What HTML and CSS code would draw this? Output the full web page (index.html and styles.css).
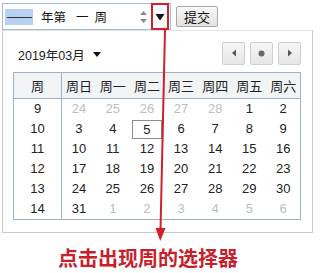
FILE: index.html
```
<!DOCTYPE html>
<html lang="zh">
<head>
<meta charset="utf-8">
<title>周选择器</title>
<link rel="stylesheet" href="styles.css">
</head>
<body>
<div class="page">
  <div class="top">
    <div class="week-input">
      <span class="sel">——</span>
      <span class="seg seg-y">年第</span>
      <span class="seg seg-n">一</span>
      <span class="seg seg-w">周</span>
      <span class="spin">
        <svg width="9" height="16" viewBox="0 0 9 16"><path d="M1 6 L4.5 2 L8 6 Z" fill="#8a8a8a"/><path d="M1 10 L4.5 14 L8 10 Z" fill="#8a8a8a"/></svg>
      </span>
      <span class="drop">
        <svg width="10" height="8" viewBox="0 0 10 8"><path d="M0.5 1 L9.5 1 L5 7.5 Z" fill="#111"/></svg>
      </span>
    </div>
    <button class="submit">提交</button>
  </div>

  <div class="popup">
    <div class="pop-head">
      <div class="month">2019年03月<svg class="caret" width="8" height="5" viewBox="0 0 8 5"><path d="M0 0 L8 0 L4 5 Z" fill="#111"/></svg></div>
      <div class="navs">
        <span class="nav"><svg width="6" height="8" viewBox="0 0 6 8"><path d="M5 0.5 L1 4 L5 7.5 Z" fill="#555"/></svg></span>
        <span class="nav"><svg width="7" height="7" viewBox="0 0 7 7"><circle cx="3.5" cy="3.5" r="3" fill="#666"/></svg></span>
        <span class="nav"><svg width="6" height="8" viewBox="0 0 6 8"><path d="M1 0.5 L5 4 L1 7.5 Z" fill="#555"/></svg></span>
      </div>
    </div>
    <table class="cal">
      <colgroup><col class="c-wk"><col><col><col><col><col><col><col></colgroup>
      <thead>
        <tr><th class="wk">周</th><th>周日</th><th>周一</th><th>周二</th><th>周三</th><th>周四</th><th>周五</th><th>周六</th></tr>
      </thead>
      <tbody>
        <tr><td class="wk">9</td><td class="o">24</td><td class="o">25</td><td class="o">26</td><td class="o">27</td><td class="o">28</td><td>1</td><td>2</td></tr>
        <tr><td class="wk">10</td><td>3</td><td>4</td><td><span class="today">5</span></td><td>6</td><td>7</td><td>8</td><td>9</td></tr>
        <tr><td class="wk">11</td><td>10</td><td>11</td><td>12</td><td>13</td><td>14</td><td>15</td><td>16</td></tr>
        <tr><td class="wk">12</td><td>17</td><td>18</td><td>19</td><td>20</td><td>21</td><td>22</td><td>23</td></tr>
        <tr><td class="wk">13</td><td>24</td><td>25</td><td>26</td><td>27</td><td>28</td><td>29</td><td>30</td></tr>
        <tr><td class="wk">14</td><td>31</td><td class="o">1</td><td class="o">2</td><td class="o">3</td><td class="o">4</td><td class="o">5</td><td class="o">6</td></tr>
      </tbody>
    </table>
  </div>

  <div class="note">点击出现周的选择器</div>

  <svg class="arrow" width="324" height="273" viewBox="0 0 324 273">
    <line x1="165" y1="30" x2="160.5" y2="230" stroke="#d0202c" stroke-width="2"/>
    <path d="M155.5 228 L165.5 228 L160.3 241 Z" fill="#d0202c"/>
  </svg>
</div>
</body>
</html>
```

FILE: styles.css
```
html, body {
  margin: 0;
  padding: 0;
  background: #ffffff;
}

body {
  font-family: "Liberation Sans", Arial, "Noto Sans CJK SC", sans-serif;
  font-size: 13px;
  color: #222;
}

.page {
  position: relative;
  width: 324px;
  height: 273px;
  overflow: hidden;
}

.top {
  display: flex;
  align-items: center;
  padding: 3px 0 0 2px;
  height: 27px;
}

.week-input {
  box-sizing: border-box;
  width: 169px;
  height: 27px;
  border: 1px solid #a7b9cf;
  display: flex;
  align-items: center;
  font-family: "Noto Sans CJK SC", "Liberation Sans", sans-serif;
  font-size: 12.5px;
  color: #111;
}

.sel {
  margin-left: 2px;
  width: 28px;
  height: 16px;
  line-height: 16px;
  background: #b7d2f1;
  color: #334;
  font-family: "Liberation Sans", Arial, sans-serif;
  font-size: 13px;
  text-align: center;
  letter-spacing: -1px;
  overflow: hidden;
}

.seg {
  line-height: 16px;
}

.seg-y { margin-left: 8px; }
.seg-n { margin-left: 10px; }
.seg-w { margin-left: 6px; }

.spin {
  margin-left: auto;
  width: 12px;
  height: 20px;
  display: flex;
  align-items: center;
  justify-content: center;
}

.drop {
  box-sizing: border-box;
  width: 18px;
  height: 27px;
  margin: 0 1px 0 2px;
  border: 2px solid #d0202c;
  display: flex;
  align-items: center;
  justify-content: center;
}

.submit {
  box-sizing: border-box;
  margin: 0 0 0 5px;
  width: 42px;
  height: 21px;
  padding: 0;
  border: 1px solid #a9a9a9;
  border-radius: 2px;
  background: linear-gradient(#f7f7f7, #e2e2e2);
  font-family: "Noto Sans CJK SC", "Liberation Sans", sans-serif;
  font-size: 13px;
  color: #111;
  line-height: 19px;
}

.popup {
  box-sizing: border-box;
  margin-left: 2px;
  width: 311px;
  height: 203px;
  border: 1px solid #c9c9c9;
  border-top-color: #e2e2e2;
  background: #fff;
}

.pop-head {
  display: flex;
  align-items: center;
  justify-content: space-between;
  padding: 11px 11px 0 15px;
  height: 22px;
}

.month {
  display: flex;
  align-items: center;
  font-family: "Liberation Sans", Arial, "Noto Sans CJK SC", sans-serif;
  font-size: 12.5px;
  color: #222;
  margin-top: 3px;
}

.caret {
  margin-left: 8px;
}

.navs {
  display: flex;
  gap: 5px;
}

.nav {
  box-sizing: border-box;
  width: 23px;
  height: 23px;
  border: 1px solid #cfcfcf;
  border-radius: 2px;
  background: linear-gradient(#f6f6f6, #e6e6e6);
  display: flex;
  align-items: center;
  justify-content: center;
}

.cal {
  margin: 8px 0 0 10px;
  border-collapse: collapse;
  table-layout: fixed;
  width: 288px;
  border: 1px solid #9fb2c4;
  font-size: 13px;
}

.cal col { width: 34px; }
.cal col.c-wk { width: 48px; }

.cal th {
  height: 25px;
  padding: 0;
  background: #f1f3f5;
  border-bottom: 1px solid #9fb2c4;
  font-weight: normal;
  font-family: "Noto Sans CJK SC", "Liberation Sans", sans-serif;
  font-size: 13px;
  color: #222;
  text-align: center;
}

.cal td {
  height: 20px;
  padding: 0;
  text-align: center;
  color: #222;
  line-height: 18px;
}

.cal .wk {
  border-right: 1px solid #9fb2c4;
}

.cal td.o {
  color: #bdbdbd;
}

.today {
  display: inline-block;
  box-sizing: border-box;
  width: 30px;
  height: 19px;
  line-height: 17px;
  border: 1px solid #8c8c8c;
  vertical-align: middle;
}

.note {
  margin: 13px 0 0 58px;
  font-family: "Noto Sans CJK SC", sans-serif;
  font-weight: bold;
  font-size: 20px;
  line-height: 24px;
  color: #c8202a;
  letter-spacing: 0;
}

.arrow {
  position: absolute;
  left: 0;
  top: 0;
  pointer-events: none;
}
```
